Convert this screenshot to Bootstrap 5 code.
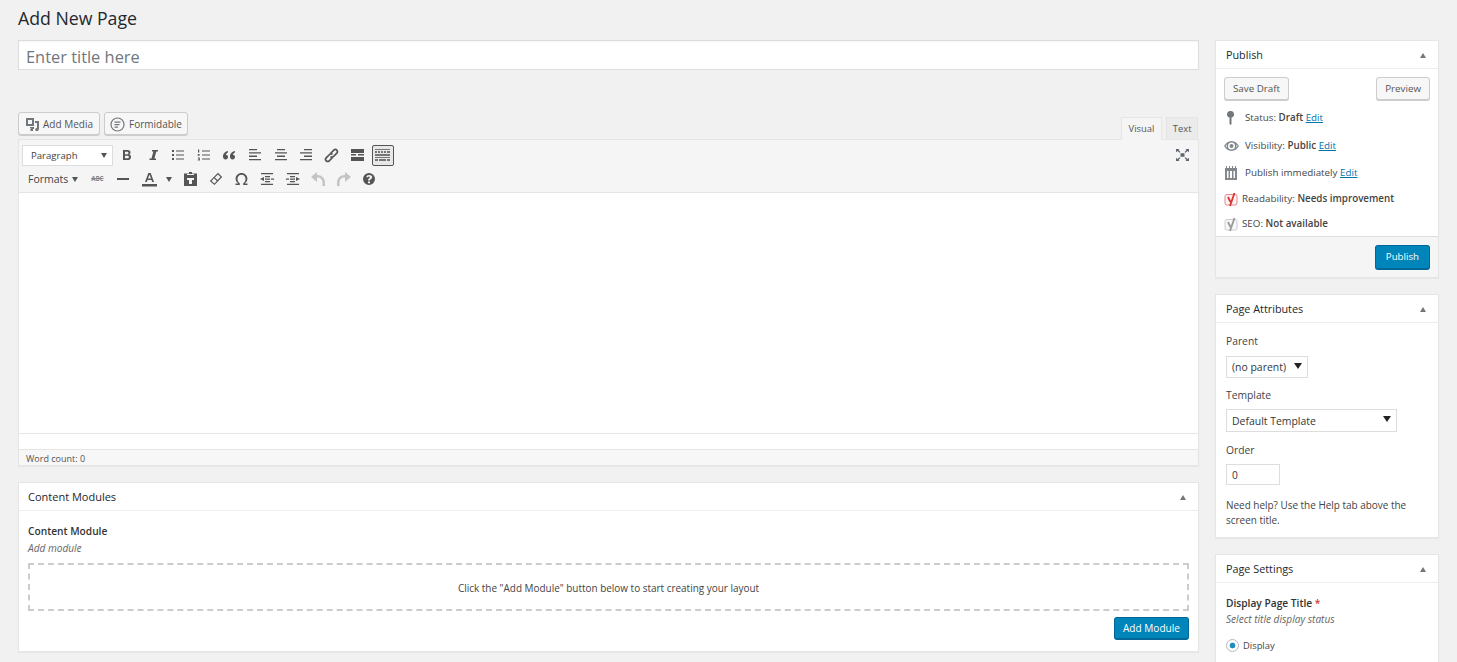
<!DOCTYPE html>
<html lang="en"><head><meta charset="utf-8"><title>Add New Page</title>
<link href="https://cdn.jsdelivr.net/npm/bootstrap@5.3.0/dist/css/bootstrap.min.css" rel="stylesheet">
<style>
html,body{height:662px;overflow:hidden}
body{background:#f1f1f1;color:#444;font-family:"Open Sans","Noto Sans",sans-serif;font-size:10px;line-height:1.4}
a{color:#0073aa}
.wp-wrap{padding:0 18px;height:662px;overflow:hidden}
.wp-h1{font-size:17.7px;font-weight:400;color:#23282d;margin:0;height:40px;padding-top:6px;line-height:24px}
.wp-cols{gap:16px}
.wp-main{width:1181px;flex:none}
.wp-side{width:224px;flex:none}
.wp-title.form-control{height:30px;border-radius:0;border:1px solid #ddd;font-size:16.4px;padding:2px 7px 0;color:#32373c;box-shadow:inset 0 1px 2px rgba(0,0,0,.04)}
.wp-title::placeholder{color:#72777c;opacity:1}
.wp-media{margin-top:42px;height:27px;gap:4px}
.wp-btn.btn{height:23px;border:1px solid #ccc;border-radius:3px;background:#f7f7f7;box-shadow:0 1px 0 #ccc;color:#555;font-size:9.8px;line-height:21px;padding:0 8px;display:inline-flex;align-items:center;gap:3px;white-space:nowrap}
.wp-btn-ico.btn{padding:1px 6px 0;font-size:10px}
.wp-btn-fm.btn{padding:1px 5px 0;gap:4px}
.wp-tabs{margin-left:auto;align-self:flex-end;gap:4px;margin-right:1px;margin-bottom:-1px;position:relative;z-index:1}
.wp-tab{height:23px;border:1px solid #e5e5e5;background:#ebebeb;color:#555;font-size:9.4px;line-height:22px;padding:0 7px}
.wp-tab-text{padding:0 5.5px}
.wp-tab-on{background:#f5f5f5;border-bottom-color:#f5f5f5}
.wp-editor{border:1px solid #e5e5e5;background:#fff;box-shadow:0 1px 1px rgba(0,0,0,.04)}
.wp-tools{background:#f5f5f5;height:53px;border-bottom:1px solid #e5e5e5;padding:3px 3px 0;position:relative}
.wp-row{height:24px;align-items:center}
.wp-para{width:91px;height:21px;background:#fff;border:1px solid #ddd;padding:1px 5px 0 8px;color:#444;font-size:9.6px;justify-content:space-between;margin-right:1.5px}
.wp-fmt{width:62.6px;color:#444;font-size:10.5px;padding-left:6px;gap:4px}
.wp-i{width:25.55px;height:24px;flex:none;display:flex;align-items:center;justify-content:center}
.wp-i svg{display:block;fill:#555}
.wp-i.wp-sink{height:21px;width:22px;margin-left:1.8px;background:#e8e8e8;border:1px solid #555;border-radius:2px}
.wp-i.wp-sink svg{fill:#777}
.wp-i.wp-off svg{fill:#c4c4c4}
.wp-full{margin-left:auto;margin-right:0}
.wp-i.wp-full svg{fill:#5f6670}
.wp-caret{width:0;height:0;border-left:3.5px solid transparent;border-right:3.5px solid transparent;border-top:5px solid #555;display:inline-block;flex:none}
.wp-area{height:241px;border-bottom:1px solid #e5e5e5;background:#fff}
.wp-gap{height:15px;background:#fff}
.wp-status{height:15px;background:#f7f7f7;border-top:1px solid #e5e5e5;padding:0 7px;font-size:9px;line-height:17px;color:#555;box-sizing:content-box;overflow:hidden}
.wp-box.card{border:1px solid #e5e5e5;border-radius:0;background:#fff;box-shadow:0 1px 1px rgba(0,0,0,.04)}
.wp-head{height:28px;border-bottom:1px solid #eee;padding:1px 10px 0;font-size:10.8px;color:#23282d}
.wp-head-main{padding:1px 10px 0 9px;font-size:11px}
.wp-up{width:0;height:0;border-left:3.5px solid transparent;border-right:3.5px solid transparent;border-bottom:5px solid #72777c;margin-right:2px}
.wp-bold{font-weight:600}
.wp-note{font-style:italic;color:#666;font-size:10.1px}
.wp-strong{font-size:10.2px;line-height:14px;color:#333}
.wp-drop{height:48px;border:2px dashed #ccc;margin-top:8px;padding-top:3px;font-size:9.95px;color:#444}
.wp-primary.btn{height:23px;background:#0085ba;border:1px solid #006799;border-bottom-width:2px;border-radius:3px;color:#fff;font-size:10.1px;padding:0 8px;line-height:20px;white-space:nowrap}
.wp-pub.btn{height:25px;padding:0 10px;font-size:9.7px}
.wp-meta{height:27px;font-size:9.8px;color:#444;padding:0 8px;gap:6px;white-space:nowrap}
.wp-ico{flex:none;display:block}
.wp-foot{height:41px;background:#f5f5f5;border-top:1px solid #ddd;padding:8px 8px 0 0}
.wp-lbl{font-size:10.3px;color:#444;line-height:14px}
.wp-help{margin-top:13px;line-height:14.5px;font-size:9.95px}
.wp-sel.form-select{height:22px;border:1px solid #ddd;border-radius:0;font-size:10.45px;padding:2px 18px 0 5px;color:#32373c;box-shadow:none;background-image:url("data:image/svg+xml,%3Csvg xmlns='http://www.w3.org/2000/svg' width='9' height='8'%3E%3Cpath d='M0 1h8L4 7z' fill='%23222'/%3E%3C/svg%3E");background-position:right 4px top 5px;background-size:9px 8px}
.wp-num.form-control{width:54px;height:21px;border:1px solid #ddd;border-radius:0;font-size:10.2px;padding:0 5px;color:#32373c}
.wp-radio.form-check-input[type=radio]:checked{width:13px;height:13px;margin:0;border:1px solid #b4b9be;background-color:#fff;background-image:radial-gradient(circle,#1e8cbe 0,#1e8cbe 2.6px,#fff 3.2px);background-size:auto;flex:none}
.wp-star{color:#dc3232}
</style></head><body>
<div class="wp-wrap">
<h1 class="wp-h1">Add New Page</h1>
<div class="d-flex align-items-start wp-cols">
<div class="wp-main">
<input class="form-control wp-title" placeholder="Enter title here">
<div class="d-flex wp-media">
<button class="btn wp-btn wp-btn-ico"><svg class="wp-ico" width="15" height="15" viewBox="0 0 15 15"><path fill="#72777c" fill-rule="evenodd" d="M1 1h8v8H1zM3 3v4h4V3zM10 4h4v8l-1 2h-2l-1-1 1-2h1V6h-2zM5 10h4v2H8v2H6l-1-1 1-2H5z"/></svg>Add Media</button>
<button class="btn wp-btn wp-btn-ico wp-btn-fm"><svg class="wp-ico" width="15" height="15" viewBox="0 0 15 15"><circle cx="7.5" cy="7.5" r="6.500" fill="none" stroke="#72777c" stroke-width="1.200"/><path fill="#72777c" d="M4.500 4.500h6v1.300h-6zM4.500 7h5v1.300h-5zM4.500 9.500h3.500v1.300H4.500z"/></svg>Formidable</button>
<div class="d-flex wp-tabs"><div class="wp-tab wp-tab-on">Visual</div><div class="wp-tab wp-tab-text">Text</div></div>
</div>
<div class="wp-editor">
<div class="wp-tools">
<div class="d-flex wp-row">
<div class="d-flex align-items-center wp-para"><span>Paragraph</span><span class="wp-caret"></span></div>
<div class="wp-i"><svg width="12" height="12" viewBox="0 0 12 12"><path fill-rule="evenodd" d="M2 1h4.500c2 0 3 1 3 2.500 0 1-.5 1.700-1.400 2 1.200.3 1.900 1.200 1.900 2.400C10 9.800 8.800 11 6.500 11H2zM4 2.700v2.500h2c.9 0 1.500-.4 1.500-1.300S6.900 2.700 6 2.700zM4 6.700v2.600h2.300c1 0 1.600-.5 1.600-1.300s-.6-1.300-1.600-1.300z"/></svg></div>
<div class="wp-i"><svg width="12" height="12" viewBox="0 0 12 12"><path d="M5 1h6v1.500H9.300L7.400 9.500H9V11H2.500V9.500h2L6.400 2.500H5z"/></svg></div>
<div class="wp-i"><svg width="14" height="12" viewBox="0 0 14 12"><path d="M1 1h2v2H1zM5 1.500h8v1H5zM1 5h2v2H1zM5 5.500h8v1H5zM1 9h2v2H1zM5 9.500h8v1H5z"/></svg></div>
<div class="wp-i"><svg width="14" height="12" viewBox="0 0 14 12"><path d="M1 .5h1.200v3H1zM.8 5h2v.8H1.700v.6h1.100v.7H.8zM.8 8.500h2v3h-2v-.7h1.200v-.4H1v-.6h1v-.5H.8zM5 1.500h8v1H5zM5 5.500h8v1H5zM5 9.500h8v1H5z"/></svg></div>
<div class="wp-i"><svg width="14" height="10" viewBox="0 0 14 10"><path d="M6 1C3.500 1.500 1.500 3 1 5.500 .7 8 2 9.500 3.500 9.500S6 8.300 6 7 5 4.800 3.800 4.800c.3-1 1.200-1.800 2.200-2.200zM13 1c-2.500.5-4.500 2-5 4.500-.3 2.500 1 4 2.500 4S13 8.300 13 7s-1-2.200-2.200-2.200c.3-1 1.200-1.800 2.200-2.200z"/></svg></div>
<div class="wp-i"><svg width="14" height="12" viewBox="0 0 14 12"><path d="M1 0h8v1.300H1zM1 3.300h12v1.300H1zM1 6.600h8v1.300H1zM1 10h12v1.300H1z"/></svg></div>
<div class="wp-i"><svg width="14" height="12" viewBox="0 0 14 12"><path d="M3 0h8v1.300H3zM1 3.300h12v1.300H1zM3 6.600h8v1.300H3zM1 10h12v1.300H1z"/></svg></div>
<div class="wp-i"><svg width="14" height="12" viewBox="0 0 14 12"><path d="M5 0h8v1.300H5zM1 3.300h12v1.300H1zM5 6.600h8v1.300H5zM1 10h12v1.300H1z"/></svg></div>
<div class="wp-i"><svg width="15" height="15" viewBox="0 0 15 15"><g fill="none" stroke="#555" stroke-width="1.700"><path d="M6.500 5.500 9.800 2.200a2 2 0 0 1 3 3L9.500 8.500a2 2 0 0 1-3 0"/><path d="M8.500 9.500 5.200 12.800a2 2 0 0 1-3-3L5.500 6.500a2 2 0 0 1 3 0"/></g></svg></div>
<div class="wp-i"><svg width="13" height="12" viewBox="0 0 13 12"><path d="M0 0h13v4H0zM0 5h5v1.500H0zM7 5h6v1.500H7zM0 8h13v4H0z"/></svg></div>
<div class="wp-i wp-sink"><svg width="17" height="15" viewBox="0 0 17 15"><path d="M1 1h15v1H1zM1 3h2v2H1zM4 3h2v2H4zM7 3h2v2H7zM10 3h2v2h-2zM13 3h3v2h-3zM1 6h15v2H1zM1 9h15v1H1zM1 11h3v2H1zM5 11h7v2H5zM13 11h3v2h-3z"/></svg></div>
<div class="wp-i wp-full"><svg width="13" height="12" viewBox="0 0 13 12"><path d="M4.500 4.200h4v3.600h-4zM0 0h3.600L2.500 1.100 4.400 3 3.600 3.800 1.400 1.900.0 3.300zM13 0v3.300L11.600 1.900 9.400 3.800 8.600 3l1.900-1.900L9.400 0zM0 12V8.700l1.400 1.400 2.200-1.900.8.800-1.900 1.900L3.600 12zM13 12H9.400l1.100-1.100L8.600 9l.8-.8 2.200 1.900L13 8.700z"/></svg></div>
</div>
<div class="d-flex wp-row">
<div class="d-flex align-items-center wp-fmt"><span>Formats</span><span class="wp-caret"></span></div>
<div class="wp-i"><span style="font-size:6.2px;font-weight:700;color:#82878c;text-decoration:line-through">ABC</span></div>
<div class="wp-i"><svg width="12" height="2" viewBox="0 0 12 2"><path d="M0 0h12v2H0z"/></svg></div>
<div class="wp-i" style="width:42px;justify-content:flex-start;padding-left:6px;gap:9px"><svg width="15" height="15" viewBox="0 0 15 15" style="flex:none"><path fill-rule="evenodd" d="M6.300 1h2.400l3.300 9H10.200l-.7-2h-4l-.7 2H3zM6 6.500h3L7.500 2.500zM0 12h15v2.500H0z"/></svg><span class="wp-caret"></span></div>
<div class="wp-i"><svg width="13" height="14" viewBox="0 0 13 14"><path fill-rule="evenodd" d="M5 0h3v1.500h5V14H0V1.500h5zM3 3h7V2H3zM3 6h7v2H8v4H5V8H3z"/></svg></div>
<div class="wp-i"><svg width="14" height="14" viewBox="0 0 14 14"><path fill-rule="evenodd" d="M9 .8 13.200 5 5.500 13 .8 9zM2.500 9l3 2.400 2.300-2.500-2.800-2.700zM5.800 5.400l2.800 2.700 2.900-3.100L9 2.500z"/></svg></div>
<div class="wp-i"><svg width="13" height="12" viewBox="0 0 13 12"><path d="M.5 12v-1.500h2.800C1.700 9.300.6 7.800.6 5.800.6 2.500 3.100 0 6.500 0s5.900 2.500 5.900 5.800c0 2-1.100 3.500-2.700 4.700h2.800V12H8.200v-1.700c1.400-1 2.300-2.500 2.300-4.400 0-2.400-1.600-4.100-4-4.100s-4 1.700-4 4.100c0 1.900.9 3.400 2.300 4.400V12z"/></svg></div>
<div class="wp-i"><svg width="14" height="12" viewBox="0 0 14 12"><path d="M1 0h12v1.300H1zM5 3h5v1.300H5zM5 5.500h5v1.300H5zM5 8h5v1.300H5zM1 10.700h12V12H1zM4 4 0 6l4 2zM11 5.500h3v1.300h-3z"/></svg></div>
<div class="wp-i"><svg width="14" height="12" viewBox="0 0 14 12"><path d="M1 0h12v1.300H1zM4 3h5v1.300H4zM4 5.500h5v1.300H4zM4 8h5v1.300H4zM1 10.700h12V12H1zM10 4l4 2-4 2zM0 5.500h3v1.300H0z"/></svg></div>
<div class="wp-i wp-off"><svg width="14" height="14" viewBox="0 0 14 14"><path d="M0 5 6 0v3c5 0 8 3 8 8v3h-2.500v-3c0-3.500-2-5.500-5.500-5.500V10z"/></svg></div>
<div class="wp-i wp-off"><svg width="14" height="14" viewBox="0 0 14 14"><path d="M14 5 8 0v3C3 3 0 6 0 11v3h2.500v-3C2.500 7.500 4.500 5.500 8 5.500V10z"/></svg></div>
<div class="wp-i"><svg width="12" height="12" viewBox="0 0 12 12"><path fill-rule="evenodd" d="M6 0a6 6 0 1 1 0 12A6 6 0 0 1 6 0zM5 8.500v1.700h2V8.500zM6 2C4.500 2 3.500 2.800 3.400 4.300H5c0-.6.400-.9 1-.9s.9.300.9.800c0 .9-1.900 1.200-1.900 3.400h1.900c0-1.600 2.300-1.800 2.300-3.700C9.200 2.900 7.800 2 6 2z"/></svg></div>
</div>
</div>
<div class="wp-area"></div>
<div class="wp-gap"></div>
<div class="wp-status">Word count: 0</div>
</div>
<div class="card wp-box" style="margin-top:16px;height:170px">
<div class="d-flex align-items-center justify-content-between wp-head wp-head-main"><span>Content Modules</span><span class="wp-up"></span></div>
<div style="padding:13px 9px 0 9px">
<div class="wp-bold wp-strong">Content Module</div>
<div class="wp-note" style="line-height:14px;margin-top:3px">Add module</div>
<div class="wp-drop d-flex align-items-center justify-content-center">Click the "Add Module" button below to start creating your layout</div>
<div class="d-flex justify-content-end" style="margin-top:6px"><button class="btn wp-primary">Add Module</button></div>
</div>
</div>
</div>
<aside class="wp-side">
<div class="card wp-box">
<div class="d-flex align-items-center justify-content-between wp-head"><span>Publish</span><span class="wp-up"></span></div>
<div class="d-flex justify-content-between" style="padding:8px 8px 4px">
<button class="btn wp-btn">Save Draft</button><button class="btn wp-btn">Preview</button>
</div>
<div class="d-flex align-items-center wp-meta" style="padding-left:11px;gap:11px"><svg class="wp-ico" width="7" height="14" viewBox="0 0 7 14"><path fill="#72777c" d="M3.500 0a3.300 3.300 0 0 1 1 6.500V13l-1 1-1-1V6.500a3.300 3.300 0 0 1 1-6.500z"/></svg><span>Status: <b class="wp-bold">Draft</b> <a href="#">Edit</a></span></div>
<div class="d-flex align-items-center wp-meta" style="gap:6px;margin-top:1px"><svg class="wp-ico" width="15" height="10" viewBox="0 0 15 10"><path fill="#82878c" fill-rule="evenodd" d="M7.500 0C11 0 13.500 2.500 15 5c-1.500 2.500-4 5-7.500 5S1.500 7.500 0 5C1.500 2.500 4 0 7.500 0zM7.500 1.500a3.500 3.500 0 1 0 0 7 3.500 3.500 0 0 0 0-7zM7.500 3a2 2 0 1 1 0 4 2 2 0 0 1 0-4zM2.500 3.500C2 4 1.700 4.500 1.500 5c.5.800 1 1.300 1.500 1.800-.3-1-.4-2.300-.5-3.300zM12.500 3.500c.1 1 0 2.300-.5 3.300.5-.5 1-1 1.500-1.800-.2-.5-.5-1-1-1.500z"/></svg><span>Visibility: <b class="wp-bold">Public</b> <a href="#">Edit</a></span></div>
<div class="d-flex align-items-center wp-meta" style="gap:7px"><svg class="wp-ico" width="14" height="14" viewBox="0 0 14 14"><path fill="#82878c" fill-rule="evenodd" d="M2 0h1v2h2V0h1v2h2V0h1v2h2V0h1v2h1v12H1V2h1zM3 5v7h1.500V5zM6 5v7h2V5zM9.500 5v7H11V5z"/></svg><span>Publish immediately <a href="#">Edit</a></span></div>
<div class="d-flex align-items-center wp-meta" style="gap:4px;height:26px"><svg class="wp-ico" width="14" height="15" viewBox="0 0 14 15"><rect x="1" y="2.500" width="12" height="10.500" rx="2" fill="#fdf3f3" stroke="#e08a8a"/><path fill="none" stroke="#dc3232" stroke-width="1.800" d="M4 5l2.500 5M10.500 1 6 14"/></svg><span>Readability: <b class="wp-bold">Needs improvement</b></span></div>
<div class="d-flex align-items-center wp-meta" style="gap:4px;height:24px"><svg class="wp-ico" width="14" height="15" viewBox="0 0 14 15"><rect x="1" y="2.500" width="12" height="10.500" rx="2" fill="#f8f8f8" stroke="#ccc"/><path fill="none" stroke="#999" stroke-width="1.800" d="M4 5l2.500 5M10.500 1 6 14"/></svg><span>SEO: <b class="wp-bold">Not available</b></span></div>
<div class="d-flex justify-content-end wp-foot"><button class="btn wp-primary wp-pub">Publish</button></div>
</div>
<div class="card wp-box" style="margin-top:16px;height:244px">
<div class="d-flex align-items-center justify-content-between wp-head"><span>Page Attributes</span><span class="wp-up"></span></div>
<div style="padding:11px 10px 0">
<div class="wp-lbl">Parent</div>
<select class="form-select wp-sel" style="width:82px;margin-top:8px"><option>(no parent)</option></select>
<div class="wp-lbl" style="margin-top:10px">Template</div>
<select class="form-select wp-sel" style="width:171px;margin-top:7px;height:23px"><option>Default Template</option></select>
<div class="wp-lbl" style="margin-top:11px">Order</div>
<input class="form-control wp-num" style="margin-top:7px" value="0">
<p class="wp-lbl wp-help mb-0">Need help? Use the Help tab above the screen title.</p>
</div>
</div>
<div class="card wp-box" style="margin-top:16px;height:200px">
<div class="d-flex align-items-center justify-content-between wp-head"><span>Page Settings</span><span class="wp-up"></span></div>
<div style="padding:13px 10px 0">
<div class="wp-bold wp-strong">Display Page Title <span class="wp-star">*</span></div>
<div class="wp-note" style="line-height:14px;margin-top:2px">Select title display status</div>
<div class="d-flex align-items-center" style="gap:4px;margin-top:13px;font-size:9.4px"><input class="form-check-input wp-radio" type="radio" checked><span>Display</span></div>
</div>
</div>
</aside>
</div>
</div>
</body></html>
